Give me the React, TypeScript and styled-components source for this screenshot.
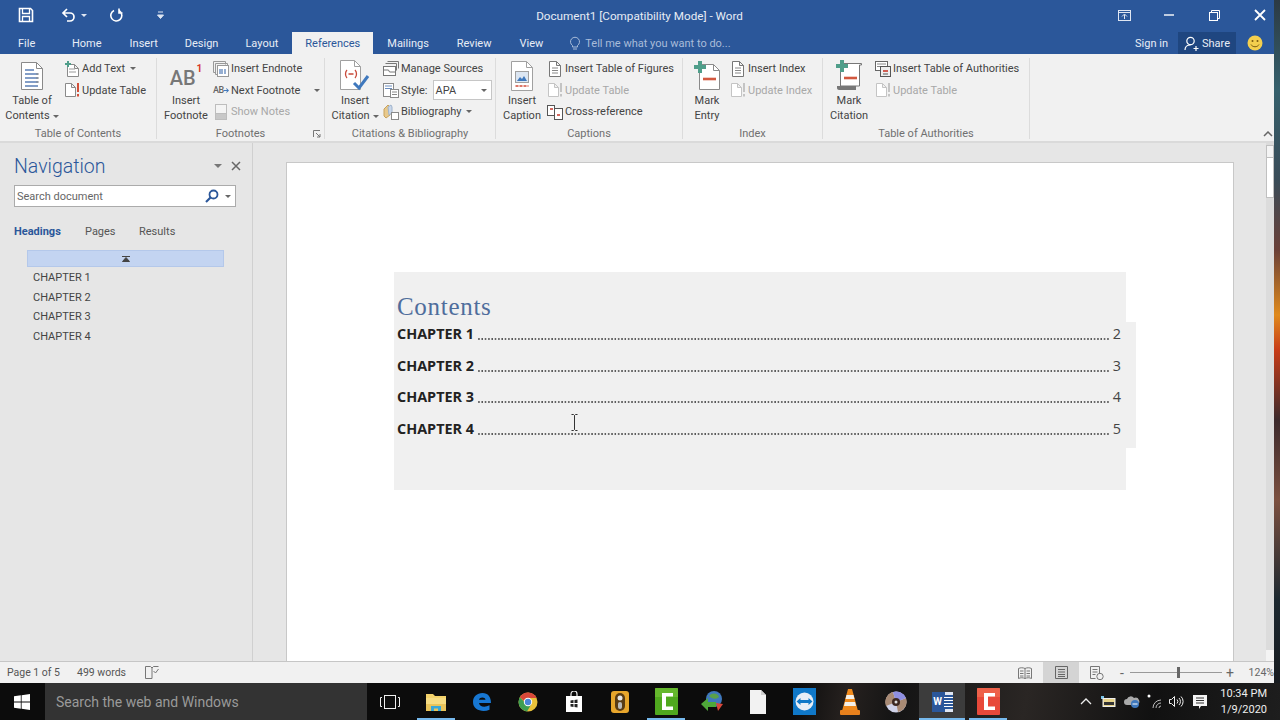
import React from "react";
import styled, { createGlobalStyle } from "styled-components";

const BLUE = "#2b579a";

const GlobalStyle = createGlobalStyle`
  html, body {
    margin: 0;
    padding: 0;
    width: 1280px;
    height: 720px;
    overflow: hidden;
    font-family: "Roboto", "Open Sans", sans-serif;
  }
  * { box-sizing: border-box; }
  svg { display: block; }
`;

const Screen = styled.div`
  width: 1280px;
  height: 720px;
  display: flex;
  flex-direction: column;
  background: #111;
`;
const Desktop = styled.div`
  display: flex;
  height: 683px;
`;
const Wallpaper = styled.div`
  flex: 1;
  background: linear-gradient(
    180deg,
    #2c3a44 0,
    #35606c 90px,
    #3a4c58 180px,
    #6a4038 250px,
    #e08a1c 315px,
    #c83c18 350px,
    #3c2a2c 420px,
    #7c5040 500px,
    #1c2830 600px,
    #181c20 683px
  );
`;
const Window = styled.div`
  width: 1274px;
  display: flex;
  flex-direction: column;
  background: #e6e6e6;
`;

/* title bar */
const TitleBar = styled.div`
  height: 32px;
  background: ${BLUE};
  display: grid;
  grid-template-columns: 1fr auto 1fr;
  align-items: center;
  color: #fff;
`;
const Qat = styled.div`
  display: flex;
  align-items: center;
  padding: 0 0 2px 18px;
`;
const TitleText = styled.div`
  font-size: 11.7px;
  color: #e6ecf5;
  margin-left: 5px;
`;
const WinControls = styled.div`
  display: flex;
  justify-content: flex-end;
  align-items: center;
  margin-right: -8px;
  padding-bottom: 2px;
`;
const WinButton = styled.div<{ $w: number }>`
  width: ${(p) => p.$w}px;
  display: flex;
  justify-content: center;
`;
const Caret = styled.span<{ $c?: string; $ml?: number }>`
  display: inline-block;
  width: 0;
  height: 0;
  flex: none;
  margin-left: ${(p) => p.$ml ?? 3}px;
  vertical-align: middle;
  border-left: 3px solid transparent;
  border-right: 3px solid transparent;
  border-top: 3px solid ${(p) => p.$c ?? "#666"};
`;
const QatItem = styled.div<{ $w: number }>`
  display: flex;
  align-items: center;
  width: ${(p) => p.$w}px;
`;

/* tabs */
const TabRow = styled.div`
  height: 22px;
  background: ${BLUE};
  display: flex;
  align-items: stretch;
  font-size: 11px;
  color: #e8edf6;
`;
const FileTab = styled.div`
  width: 58px;
  padding-left: 18px;
  display: flex;
  align-items: center;
`;
const Tab = styled.div<{ $active?: boolean; $tight?: boolean }>`
  padding: 0 ${(p) => (p.$active ? 13 : p.$tight ? 13 : 14)}px;
  display: flex;
  align-items: center;
  background: ${(p) => (p.$active ? "#f1f1f1" : "transparent")};
  color: ${(p) => (p.$active ? BLUE : "#e8edf6")};
`;
const TellMe = styled.div`
  display: flex;
  align-items: center;
  gap: 5px;
  margin-left: 13px;
  color: #a9bcd9;
`;
const TabRight = styled.div`
  margin-left: auto;
  display: flex;
  align-items: center;
`;
const SignIn = styled.div`
  margin-right: 10px;
`;
const ShareButton = styled.div`
  width: 58px;
  height: 22px;
  background: #1f4680;
  display: flex;
  align-items: center;
  justify-content: center;
  gap: 3px;
`;
const SmileSlot = styled.div`
  width: 38px;
  display: flex;
  justify-content: center;
`;

/* ribbon */
const Ribbon = styled.div`
  height: 89px;
  background: #f1f1f1;
  border-bottom: 2px solid #dadada;
  display: flex;
  font-size: 11px;
  color: #444;
`;
const Group = styled.div<{ $w: number }>`
  width: ${(p) => p.$w}px;
  margin-top: 4px;
  height: 81px;
  display: flex;
  flex-direction: column;
  border-right: 1px solid #dcdcdc;
  flex: none;
`;
const GroupBody = styled.div<{ $pad: number }>`
  height: 69px;
  flex: none;
  display: flex;
  padding-left: ${(p) => p.$pad}px;
`;
const GroupLabel = styled.div`
  position: relative;
  flex: none;
  text-align: center;
  font-size: 11px;
  color: #707070;
  line-height: 14px;
`;
const Launcher = styled.span`
  position: absolute;
  right: 3px;
  top: 3px;
`;
const BigButton = styled.div<{ $w: number }>`
  width: ${(p) => p.$w}px;
  flex: none;
  display: flex;
  flex-direction: column;
  align-items: center;
  text-align: center;
  line-height: 15px;
  color: #444;
`;
const BigIcon = styled.div`
  height: 35px;
  display: flex;
  align-items: center;
  justify-content: center;
`;
const FootnoteGlyph = styled.div`
  font-size: 20px;
  font-weight: 500;
  color: #777;
  display: flex;
  align-items: flex-start;
  line-height: 24px;
  margin-top: 4px;
  sup {
    font-size: 10px;
    font-weight: 700;
    line-height: 12px;
    color: #d8392a;
    margin-top: -3px;
    margin-left: 1px;
  }
`;
const SmallColumn = styled.div<{ $gap: number }>`
  margin-left: ${(p) => p.$gap}px;
  display: flex;
  flex-direction: column;
`;
const SmallButton = styled.div<{ $off?: boolean }>`
  height: 21.5px;
  display: flex;
  align-items: center;
  gap: 2px;
  white-space: nowrap;
  color: ${(p) => (p.$off ? "#a8a8a8" : "#444")};
`;
const SmallIcon = styled.span`
  width: 16px;
  height: 16px;
  flex: none;
  display: flex;
  align-items: center;
  justify-content: center;
`;
const TinyAB = styled.span`
  font-size: 9px;
  font-weight: 500;
  color: #666;
  letter-spacing: -0.5px;
`;
const StyleBox = styled.div`
  width: 59px;
  height: 20px;
  margin-left: 3px;
  background: #fff;
  border: 1px solid #c6c6c6;
  display: flex;
  align-items: center;
  justify-content: space-between;
  padding: 0 4px 0 2px;
`;
const Collapse = styled.div`
  margin-left: auto;
  align-self: flex-end;
  padding: 0 1px 4px 0;
`;

/* main area */
const Main = styled.div`
  flex: 1;
  min-height: 0;
  display: flex;
`;
const NavPane = styled.div`
  width: 253px;
  flex: none;
  border-right: 1px solid #d0d0d0;
  padding: 11px 6px 0 14px;
  color: #444;
`;
const NavHeader = styled.div`
  display: flex;
  align-items: center;
  height: 24px;
`;
const NavTitle = styled.div`
  font-size: 19.5px;
  font-weight: 300;
  color: ${BLUE};
  flex: 1;
`;
const NavCaret = styled(Caret)`
  margin-right: 4px;
  border-left-width: 4px;
  border-right-width: 4px;
  border-top-width: 4px;
`;
const NavSearch = styled.div`
  margin-top: 7px;
  width: 222px;
  height: 22px;
  background: #fff;
  border: 1px solid #ababab;
  display: flex;
  align-items: center;
  padding: 0 4px 0 2px;
  font-size: 11px;
  color: #666;
`;
const NavSearchText = styled.span`
  flex: 1;
`;
const NavTabs = styled.div`
  display: flex;
  margin-top: 17px;
  font-size: 11px;
  height: 14px;
  align-items: center;
`;
const NavTab = styled.div<{ $active?: boolean; $w: number }>`
  width: ${(p) => p.$w}px;
  font-weight: ${(p) => (p.$active ? 700 : 400)};
  color: ${(p) => (p.$active ? BLUE : "#555")};
`;
const NavList = styled.div`
  margin: 12px 0 0 13px;
`;
const NavSelected = styled.div`
  width: 197px;
  height: 17px;
  margin-bottom: 1px;
  background: #c3d4f1;
  border: 1px solid #b4c8ea;
  display: flex;
  align-items: center;
  justify-content: center;
`;
const NavItem = styled.div`
  height: 19.7px;
  padding-left: 6px;
  font-size: 11px;
  line-height: 19.7px;
  color: #444;
`;
const DocArea = styled.div`
  flex: 1;
  min-width: 0;
  overflow: hidden;
  padding: 19px 0 0 33px;
  background: #e6e6e6;
`;
const Page = styled.div`
  position: relative;
  width: 948px;
  height: 600px;
  background: #fff;
  border: 1px solid #c8c8c8;
  padding: 109px 0 0 107px;
`;
const TocField = styled.div`
  width: 732px;
  height: 218px;
  background: #f0f0f0;
  padding: 20px 0 0 3px;
`;
const TocTitle = styled.div`
  font-family: "Liberation Serif", serif;
  font-size: 25px;
  letter-spacing: 0.7px;
  line-height: 30px;
  color: #4f6d9c;
`;
const TocRow = styled.div`
  display: flex;
  align-items: flex-start;
  height: 31.5px;
  width: 739px;
  margin-right: -10px;
  padding-right: 15px;
  background: #f0f0f0;
  font-family: "Open Sans", sans-serif;
  line-height: 24px;
  color: #222;
  font-size: 14.4px;
`;
const TocName = styled.span`
  font-weight: 700;
`;
const Leader = styled.span`
  flex: 1;
  height: 2px;
  margin: 16px 3px 0 4px;
  background: radial-gradient(circle at 1px 1px, #555 0.7px, transparent 1px) 0 0 / 3.33px 2px repeat-x;
`;
const PageNum = styled.span`
  color: #444;
`;
const TextCursor = styled.div`
  position: absolute;
  left: 284px;
  top: 251px;
`;
const ScrollBar = styled.div`
  width: 8px;
  flex: none;
  background: #dcdcdc;
  display: flex;
  flex-direction: column;
`;
const ScrollUp = styled.div`
  height: 13px;
  background: #f4f4f4;
  border: 1px solid #c0c0c0;
  margin-top: 2px;
`;
const ScrollThumb = styled.div`
  height: 40px;
  background: #fff;
  border: 1px solid #c0c0c0;
  border-top: 0;
`;
const ScrollDown = styled.div`
  height: 11px;
  margin-top: auto;
  background: #f4f4f4;
`;

/* status bar */
const StatusBar = styled.div`
  height: 22px;
  background: #f1f1f1;
  border-top: 1px solid #c6c6c6;
  display: flex;
  align-items: center;
  font-size: 10.5px;
  color: #555;
  padding-left: 7px;
`;
const StatusWords = styled.span`
  margin-left: 17px;
`;
const StatusProof = styled.span`
  margin-left: 19px;
`;
const StatusRight = styled.div`
  margin-left: auto;
  display: flex;
  align-items: center;
  height: 100%;
`;
const ViewButton = styled.div<{ $active?: boolean }>`
  width: 36px;
  height: 100%;
  display: flex;
  align-items: center;
  justify-content: center;
  background: ${(p) => (p.$active ? "#d4d4d4" : "transparent")};
`;
const ZoomSign = styled.span`
  width: 14px;
  text-align: center;
  font-size: 14px;
  color: #666;
`;
const ZoomTrack = styled.div`
  position: relative;
  width: 92px;
  height: 1px;
  background: #999;
  margin: 0 1px;
`;
const ZoomThumb = styled.div`
  position: absolute;
  left: 47px;
  top: -5px;
  width: 3px;
  height: 11px;
  background: #666;
`;
const ZoomValue = styled.span`
  width: 37px;
  text-align: right;
  color: #666;
`;

/* taskbar */
const Taskbar = styled.div`
  height: 37px;
  display: flex;
  background: linear-gradient(100deg, #0c0c0c 0, #0c0c0c 62%, #26211f 66%, #141414 70%, #2a2624 80%, #111 90%, #1e1e1e 100%);
  color: #fff;
`;
const StartButton = styled.div`
  width: 45px;
  display: flex;
  align-items: center;
  justify-content: center;
  padding-right: 1px;
`;
const TaskSearch = styled.div`
  width: 322px;
  background: #333;
  display: flex;
  align-items: center;
  padding-left: 11px;
  font-size: 14px;
  color: #9a9a9a;
`;
const TaskButton = styled.div<{ $running?: boolean; $active?: boolean }>`
  position: relative;
  width: 46px;
  display: flex;
  align-items: center;
  justify-content: center;
  background: ${(p) => (p.$active ? "#3c3c3c" : "transparent")};
  &::after {
    content: "";
    display: ${(p) => (p.$running ? "block" : "none")};
    position: absolute;
    bottom: 0;
    left: ${(p) => (p.$active ? 0 : 4)}px;
    right: ${(p) => (p.$active ? 0 : 4)}px;
    height: 2px;
    background: #76b9ed;
  }
`;
const Tray = styled.div`
  margin-left: auto;
  display: flex;
  align-items: center;
  padding-right: 13px;
`;
const TraySlot = styled.div`
  width: 22.7px;
  display: flex;
  justify-content: center;
`;
const Clock = styled.div`
  width: 56px;
  text-align: right;
  font-size: 11px;
  line-height: 16px;
  color: #eee;
`;

/* icons */
const Svg = ({ w, h, children }: { w: number; h: number; children: React.ReactNode }) => (
  <svg width={w} height={h} viewBox={`0 0 ${w} ${h}`} fill="none">
    {children}
  </svg>
);

const PageShape = ({ x = 0.5, y = 0.5, w = 11, h = 14, c = "#8a8a8a", fill = "#fff" }) => (
  <path
    d={`M${x} ${y}h${w - 4}l4 4v${h - 4}h-${w}z M${x + w - 4} ${y}v4h4`}
    stroke={c}
    fill={fill}
  />
);

const TocBig = () => (
  <Svg w={24} h={30}>
    <path d="M1.500 1.500h15l6 6v21h-21z" fill="#fff" stroke="#8a8a8a" />
    <path d="M16.500 1.500v6h6" stroke="#8a8a8a" />
    <path d="M5 9h9M5 13h13M5 17h13M5 21h13M5 25h13" stroke="#5b7fb5" strokeWidth="1.600" />
    <path d="M16 13h3M16 17h3M16 21h3" stroke="#888" />
  </Svg>
);
const CitationBig = () => (
  <Svg w={36} h={34}>
    <path d="M3.500 1.500h14l6 6v23h-20z" fill="#fff" stroke="#a0a0a0" />
    <path d="M17.500 1.500v6h6" stroke="#a0a0a0" />
    <path d="M10 11c-2 2-2 6 0 8M18 11c2 2 2 6 0 8M11.500 15h5" stroke="#c8493a" strokeWidth="1.300" />
    <path d="M17 24l5 5 9-12" stroke="#3f78bd" strokeWidth="3" />
  </Svg>
);
const CaptionBig = () => (
  <Svg w={24} h={32}>
    <path d="M1.500 1.500h15l6 6v23h-21z" fill="#fff" stroke="#a0a0a0" />
    <path d="M16.500 1.500v6h6" stroke="#a0a0a0" />
    <rect x="5.500" y="11.500" width="13" height="11" fill="#dce6f2" stroke="#a0a0a0" />
    <path d="M7 21l3-4 2 2 2-3 3 5z" fill="#3f78bd" />
    <path d="M5.500 26h13" stroke="#d24b3a" strokeWidth="1.600" strokeDasharray="3 1" />
  </Svg>
);
const MarkEntryBig = () => (
  <Svg w={28} h={30}>
    <path d="M6.500 3.500h14l6 6v19h-20z" fill="#fff" stroke="#8a8a8a" />
    <path d="M20.500 3.500v6h6" stroke="#8a8a8a" />
    <path d="M5 0h4v4h4v4H9v4H5V8H1V4h4z" fill="#4f9e8a" />
    <path d="M10 18h13" stroke="#d2583f" strokeWidth="2.600" />
  </Svg>
);
const MarkCitationBig = () => (
  <Svg w={30} h={31}>
    <path d="M8.500 3.500h19v1.500h-2V26h-19V6z" fill="#fff" stroke="#777" />
    <path d="M3 26h19v4H5c-1 0-2-1-2-2z" fill="#777" />
    <path d="M6 0h4v4h4v4h-4v4H6V8H2V4h4z" fill="#4f9e8a" />
    <path d="M10 18h13" stroke="#d2583f" strokeWidth="2.600" />
  </Svg>
);

const AddTextIcon = () => (
  <Svg w={16} h={16}>
    <PageShape x={3.5} y={3.5} w={11} h={12} />
    <path d="M5 8h6M5 11h7" stroke="#999" />
    <path d="M3 0h2v2h2v2H5v2H3V4H1V2h2z" fill="#4f9e8a" />
  </Svg>
);
const UpdateIcon = ({ off }: { off?: boolean }) => (
  <Svg w={16} h={16}>
    <PageShape x={1.5} y={1.5} w={10} h={13} c={off ? "#c4c4c4" : "#8a8a8a"} />
    <path d="M14 1v9M14 12v2.500" stroke={off ? "#c4c4c4" : "#d2503a"} strokeWidth="2" />
  </Svg>
);
const EndnoteIcon = () => (
  <Svg w={16} h={16}>
    <path d="M0.500 0.500h12v3M0.500 0.500v11h2" stroke="#999" />
    <path d="M2.500 2.500h12v3M2.500 2.500v11h2" stroke="#999" />
    <rect x="4.500" y="4.500" width="11" height="11" fill="#fff" stroke="#999" />
    <path d="M7 8v5M9 8v5M12 8v5" stroke="#6a8dbf" strokeWidth="1.400" />
  </Svg>
);
const NextNoteIcon = () => (
  <Svg w={8} h={9}>
    <path d="M0 4.500h6M3.500 1.500l3 3-3 3" stroke="#3f78bd" strokeWidth="1.500" />
  </Svg>
);
const NotesIcon = () => (
  <Svg w={16} h={16}>
    <rect x="2.500" y="0.500" width="11" height="15" fill="#f4f4f4" stroke="#bdbdbd" />
    <rect x="2.500" y="9.500" width="11" height="6" fill="#c8c8c8" stroke="#bdbdbd" />
  </Svg>
);
const SourcesIcon = () => (
  <Svg w={16} h={16}>
    <path d="M4.500 0.500h11v7M2.500 2.500h11v7" stroke="#777" />
    <rect x="0.500" y="5.500" width="12" height="9" fill="#fff" stroke="#777" />
    <path d="M0.500 9h5l1 2h6" stroke="#777" />
  </Svg>
);
const StyleIcon = () => (
  <Svg w={16} h={16}>
    <rect x="0.500" y="1.500" width="10" height="13" fill="#fff" stroke="#8a8a8a" />
    <path d="M2 4h7M2 6.500h7" stroke="#6a8dbf" />
    <rect x="7.500" y="7.500" width="8" height="8" fill="#fff" stroke="#8a8a8a" />
    <path d="M9 10h5M9 12.500h5" stroke="#888" />
  </Svg>
);
const BibIcon = () => (
  <Svg w={16} h={16}>
    <path d="M1 5l4-4 2 2v8l-4 3-2-2z" fill="#e8c98c" stroke="#c8a25c" />
    <path d="M5 3l3-2 1 2v6l-3 2z" fill="#c9d7ea" stroke="#9fb3cc" />
    <rect x="8.500" y="8.500" width="7" height="7" fill="#fff" stroke="#8a8a8a" />
  </Svg>
);
const TofIcon = () => (
  <Svg w={16} h={16}>
    <PageShape x={2.5} y={0.5} w={11} h={15} c="#777" />
    <path d="M5 7h6M5 9.500h6M5 12h6" stroke="#888" />
  </Svg>
);
const CrossRefIcon = () => (
  <Svg w={16} h={16}>
    <rect x="0.500" y="1.500" width="7" height="10" fill="#fff" stroke="#555" />
    <rect x="7.500" y="4.500" width="8" height="11" fill="#fff" stroke="#555" />
    <path d="M3 5h3M10 11h3" stroke="#c8392b" strokeWidth="1.600" />
  </Svg>
);
const ToaIcon = () => (
  <Svg w={16} h={16}>
    <rect x="0.500" y="0.500" width="12" height="9" fill="#fff" stroke="#666" />
    <path d="M2 3h9M2 5.500h9" stroke="#888" />
    <rect x="5.500" y="5.500" width="10" height="10" fill="#eee" stroke="#555" />
    <path d="M8 10h5" stroke="#c8392b" strokeWidth="1.600" />
    <path d="M8 13h5" stroke="#555" />
  </Svg>
);

const AppFolder = () => (
  <Svg w={20} h={18}>
    <path d="M0 1h7l2 2h11v3H0z" fill="#f3d26a" />
    <rect y="5" width="20" height="13" fill="#f6dc82" />
    <rect x="0" y="11" width="20" height="7" fill="#e9c45a" />
    <path d="M5 18v-5h10v5h-3v-2.500H8V18z" fill="#38a7d8" />
  </Svg>
);
const AppEdge = () => (
  <Svg w={20} h={20}>
    <path
      d="M1 10C1 4.500 5 1 10.500 1 16 1 19 5 19 11H7c.3 3.500 5.500 5 10.500 2.300v4.400C11 20.500 1 18.500 1 10zm6-2.200h6.500C13.300 4.800 7.600 4.600 7 7.800z"
      fill="#1777d2"
    />
  </Svg>
);
const AppChrome = () => (
  <Svg w={20} h={20}>
    <circle cx="10" cy="10" r="9.500" fill="#e8c13a" />
    <path d="M1.800 5.200A9.500 9.500 0 0 1 18.600 6H10a4 4 0 0 0-3.900 3z" fill="#d8473a" />
    <path d="M1.800 5.200A9.500 9.500 0 0 0 9 19.400L13 12.800a4.300 4.300 0 0 1-6.800-3z" fill="#3f9e52" />
    <circle cx="10" cy="10" r="4.200" fill="#fff" />
    <circle cx="10" cy="10" r="3.200" fill="#4a86d8" />
  </Svg>
);
const AppStore = () => (
  <Svg w={18} h={22}>
    <path d="M6 5V3a3 3 0 0 1 6 0v2" stroke="#eee" strokeWidth="1.200" />
    <rect x="1" y="5" width="16" height="16" fill="#fff" />
    <path d="M5.500 9.500l3-.5v3H5.500zM9.500 8.900l3-.5V12h-3zM5.500 13h3v3l-3-.5zM9.500 13h3v3.600l-3-.5z" fill="#222" />
  </Svg>
);
const AppBulb = () => (
  <Svg w={18} h={22}>
    <rect x="0" y="0" width="18" height="22" rx="3" fill="#e8a62c" />
    <rect x="4" y="2" width="10" height="18" rx="5" fill="#5a3c14" />
    <circle cx="9" cy="7" r="2.500" fill="#e8e8e8" />
    <rect x="7" y="11" width="4" height="7" rx="2" fill="#bbb" />
  </Svg>
);
const AppCamtasia = ({ bg, top }: { bg: string; top: string }) => (
  <Svg w={23} h={27}>
    <rect width="23" height="27" rx="1" fill={bg} />
    <path d="M0 0h23v9H0z" fill={top} opacity="0.5" />
    <path d="M7 5h11v3.500h-7v10h7V22H7z" fill="#fff" />
  </Svg>
);
const AppIdm = () => (
  <Svg w={24} h={24}>
    <circle cx="14" cy="9" r="8" fill="#3f78bd" />
    <path d="M9 6c3-4 9-3 10 1-3 3-7 2-10-1z" fill="#5aa04a" />
    <path d="M1 14l7-6v4h8v5H8v4z" fill="#4fa83a" />
    <path d="M16 13l7 1-5 7z" fill="#d8473a" />
  </Svg>
);
const AppFile = () => (
  <Svg w={16} h={24}>
    <path d="M0 0h11l5 5v19H0z" fill="#f2f2f2" />
    <path d="M11 0v5h5z" fill="#cfcfcf" />
  </Svg>
);
const AppTeamViewer = () => (
  <Svg w={23} h={27}>
    <rect width="23" height="27" fill="#1078c8" />
    <circle cx="11.500" cy="13.500" r="9" fill="#e8eef6" />
    <path d="M3.500 13.500l4-3.500v2h8v-2l4 3.500-4 3.500v-2h-8v2z" fill="#1078c8" />
  </Svg>
);
const AppVlc = () => (
  <Svg w={20} h={26}>
    <path d="M8 0h4l6 22H2z" fill="#f08a1c" />
    <path d="M6.500 6h7l1 4h-9zM5 13h10l1 4H4z" fill="#f4f0e8" />
    <rect y="21" width="20" height="5" rx="1" fill="#e8801c" />
  </Svg>
);
const AppDisc = () => (
  <Svg w={22} h={22}>
    <circle cx="11" cy="11" r="10.500" fill="#cfd2e8" />
    <path d="M11 11L21 7a10.500 10.500 0 0 1-8 14zM11 11L1 15A10.500 10.500 0 0 1 8 1z" fill="#a88a74" />
    <path d="M11 11L8 1a10.500 10.500 0 0 1 13 6z" fill="#8f8fe0" />
    <circle cx="11" cy="11" r="4" fill="#3c2820" />
    <circle cx="11" cy="11" r="1.500" fill="#ddd" />
  </Svg>
);
const WordLetter = styled.span`
  font-size: 10px;
  font-weight: 700;
  color: #fff;
  width: 12px;
  text-align: center;
`;
const WordTile = styled.div`
  width: 21px;
  height: 20px;
  display: flex;
  align-items: center;
  background: linear-gradient(90deg, ${BLUE} 60%, #dfe6f2 60%);
`;
const WordLines = styled.span`
  width: 9px;
  height: 14px;
  background: repeating-linear-gradient(180deg, #2b579a 0 1.5px, #fff 1.5px 3px);
`;

const chapters = ["CHAPTER 1", "CHAPTER 2", "CHAPTER 3", "CHAPTER 4"];

export default function App() {
  return (
    <Screen>
      <GlobalStyle />
      <Desktop>
        <Window>
          <TitleBar>
            <Qat>
              <QatItem $w={43}>
                <Svg w={16} h={16}>
                  <path d="M1.500 1.500h11l2 2v11h-13z" stroke="#fff" strokeWidth="1.600" />
                  <path d="M4.500 2v4.500h7V2M4.500 14v-4.500h7V14" stroke="#fff" strokeWidth="1.300" />
                </Svg>
              </QatItem>
              <QatItem $w={48}>
                <Svg w={15} h={14}>
                  <path d="M6 1L2 5l4 4M2 5h7a4 4 0 0 1 0 8H6" stroke="#fff" strokeWidth="1.700" />
                </Svg>
                <Caret $c="#dfe6f2" $ml={5} />
              </QatItem>
              <QatItem $w={48}>
                <Svg w={14} h={14}>
                  <path d="M5 2.500A5.500 5.500 0 1 0 10.500 3M10 .5v4.500h3.500" stroke="#fff" strokeWidth="1.600" />
                </Svg>
              </QatItem>
              <QatItem $w={10}>
                <Svg w={7} h={8}>
                  <path d="M1 1h5M0.500 4h6l-3 3.500z" stroke="#dfe6f2" fill="#dfe6f2" strokeWidth="1" />
                </Svg>
              </QatItem>
            </Qat>
            <TitleText>Document1 [Compatibility Mode] - Word</TitleText>
            <WinControls>
              <WinButton $w={44}>
                <Svg w={13} h={11}>
                  <rect x="0.500" y="0.500" width="12" height="10" stroke="#dfe6f2" />
                  <path d="M0.500 2.500h12M6.500 9V4.500M4 6.500l2.500-2.500L9 6.500" stroke="#dfe6f2" />
                </Svg>
              </WinButton>
              <WinButton $w={46}>
                <Svg w={10} h={2}>
                  <path d="M0 1h10" stroke="#fff" strokeWidth="1.400" />
                </Svg>
              </WinButton>
              <WinButton $w={45}>
                <Svg w={11} h={11}>
                  <rect x="0.500" y="2.500" width="8" height="8" stroke="#fff" />
                  <path d="M2.500 2.500v-2h8v8h-2" stroke="#fff" />
                </Svg>
              </WinButton>
              <WinButton $w={45}>
                <Svg w={12} h={12}>
                  <path d="M1 1l10 10M11 1L1 11" stroke="#fff" strokeWidth="1.800" />
                </Svg>
              </WinButton>
            </WinControls>
          </TitleBar>

          <TabRow>
            <FileTab>File</FileTab>
            <Tab>Home</Tab>
            <Tab>Insert</Tab>
            <Tab $tight>Design</Tab>
            <Tab>Layout</Tab>
            <Tab $active>References</Tab>
            <Tab>Mailings</Tab>
            <Tab>Review</Tab>
            <Tab>View</Tab>
            <TellMe>
              <Svg w={10} h={14}>
                <path d="M2.500 9.500a4.500 4.500 0 1 1 5 0V11h-5zM3 13h4" stroke="#a9bcd9" />
              </Svg>
              Tell me what you want to do...
            </TellMe>
            <TabRight>
              <SignIn>Sign in</SignIn>
              <ShareButton>
                <Svg w={15} h={15}>
                  <circle cx="6.500" cy="5" r="3.700" stroke="#fff" strokeWidth="1.200" />
                  <path d="M1 14c0-3 2-5 5.500-5M9.500 12.500h5M12 10v5" stroke="#fff" strokeWidth="1.200" />
                </Svg>
                Share
              </ShareButton>
              <SmileSlot>
                <Svg w={16} h={16}>
                  <circle cx="8" cy="8" r="7.500" fill="#f4cf4e" />
                  <circle cx="5.500" cy="6" r="1" fill="#7a5c10" />
                  <circle cx="10.500" cy="6" r="1" fill="#7a5c10" />
                  <path d="M4 9.500c1.500 3 6.500 3 8 0" stroke="#7a5c10" />
                </Svg>
              </SmileSlot>
            </TabRight>
          </TabRow>

          <Ribbon>
            <Group $w={157}>
              <GroupBody $pad={5}>
                <BigButton $w={54}>
                  <BigIcon><TocBig /></BigIcon>
                  Table of
                  <span>Contents<Caret /></span>
                </BigButton>
                <SmallColumn $gap={5}>
                  <SmallButton><SmallIcon><AddTextIcon /></SmallIcon>Add Text<Caret /></SmallButton>
                  <SmallButton><SmallIcon><UpdateIcon /></SmallIcon>Update Table</SmallButton>
                </SmallColumn>
              </GroupBody>
              <GroupLabel>Table of Contents</GroupLabel>
            </Group>

            <Group $w={168}>
              <GroupBody $pad={1}>
                <BigButton $w={56}>
                  <BigIcon>
                    <FootnoteGlyph>AB<sup>1</sup></FootnoteGlyph>
                  </BigIcon>
                  Insert
                  <span>Footnote</span>
                </BigButton>
                <SmallColumn $gap={-1}>
                  <SmallButton><SmallIcon><EndnoteIcon /></SmallIcon>Insert Endnote</SmallButton>
                  <SmallButton>
                    <SmallIcon><TinyAB>AB</TinyAB><NextNoteIcon /></SmallIcon>
                    Next Footnote<Caret $ml={12} />
                  </SmallButton>
                  <SmallButton $off><SmallIcon><NotesIcon /></SmallIcon>Show Notes</SmallButton>
                </SmallColumn>
              </GroupBody>
              <GroupLabel>
                Footnotes
                <Launcher>
                  <Svg w={8} h={8}>
                    <path d="M0.500 7V0.500H7M3 3l4 4M7 4v3H4" stroke="#777" />
                  </Svg>
                </Launcher>
              </GroupLabel>
            </Group>

            <Group $w={171}>
              <GroupBody $pad={2}>
                <BigButton $w={56}>
                  <BigIcon><CitationBig /></BigIcon>
                  Insert
                  <span>Citation<Caret /></span>
                </BigButton>
                <SmallColumn $gap={0}>
                  <SmallButton><SmallIcon><SourcesIcon /></SmallIcon>Manage Sources</SmallButton>
                  <SmallButton>
                    <SmallIcon><StyleIcon /></SmallIcon>Style:
                    <StyleBox>APA<Caret /></StyleBox>
                  </SmallButton>
                  <SmallButton><SmallIcon><BibIcon /></SmallIcon>Bibliography<Caret /></SmallButton>
                </SmallColumn>
              </GroupBody>
              <GroupLabel>Citations &amp; Bibliography</GroupLabel>
            </Group>

            <Group $w={187}>
              <GroupBody $pad={2}>
                <BigButton $w={48}>
                  <BigIcon><CaptionBig /></BigIcon>
                  Insert
                  <span>Caption</span>
                </BigButton>
                <SmallColumn $gap={1}>
                  <SmallButton><SmallIcon><TofIcon /></SmallIcon>Insert Table of Figures</SmallButton>
                  <SmallButton $off><SmallIcon><UpdateIcon off /></SmallIcon>Update Table</SmallButton>
                  <SmallButton><SmallIcon><CrossRefIcon /></SmallIcon>Cross-reference</SmallButton>
                </SmallColumn>
              </GroupBody>
              <GroupLabel>Captions</GroupLabel>
            </Group>

            <Group $w={140}>
              <GroupBody $pad={4}>
                <BigButton $w={40}>
                  <BigIcon><MarkEntryBig /></BigIcon>
                  Mark
                  <span>Entry</span>
                </BigButton>
                <SmallColumn $gap={3}>
                  <SmallButton><SmallIcon><TofIcon /></SmallIcon>Insert Index</SmallButton>
                  <SmallButton $off><SmallIcon><UpdateIcon off /></SmallIcon>Update Index</SmallButton>
                </SmallColumn>
              </GroupBody>
              <GroupLabel>Index</GroupLabel>
            </Group>

            <Group $w={207}>
              <GroupBody $pad={2}>
                <BigButton $w={48}>
                  <BigIcon><MarkCitationBig /></BigIcon>
                  Mark
                  <span>Citation</span>
                </BigButton>
                <SmallColumn $gap={2}>
                  <SmallButton><SmallIcon><ToaIcon /></SmallIcon>Insert Table of Authorities</SmallButton>
                  <SmallButton $off><SmallIcon><UpdateIcon off /></SmallIcon>Update Table</SmallButton>
                </SmallColumn>
              </GroupBody>
              <GroupLabel>Table of Authorities</GroupLabel>
            </Group>

            <Collapse>
              <Svg w={10} h={6}>
                <path d="M1 5l4-4 4 4" stroke="#666" strokeWidth="1.500" />
              </Svg>
            </Collapse>
          </Ribbon>

          <Main>
            <NavPane>
              <NavHeader>
                <NavTitle>Navigation</NavTitle>
                <NavCaret $c="#777" />
                <WinButton $w={20}>
                  <Svg w={10} h={10}>
                    <path d="M1 1l8 8M9 1L1 9" stroke="#666" strokeWidth="1.500" />
                  </Svg>
                </WinButton>
              </NavHeader>
              <NavSearch>
                <NavSearchText>Search document</NavSearchText>
                <Svg w={14} h={14}>
                  <circle cx="8.500" cy="5.500" r="4" stroke={BLUE} strokeWidth="1.800" />
                  <path d="M5.500 8.500L1 13" stroke={BLUE} strokeWidth="2.200" />
                </Svg>
                <Caret $ml={6} />
              </NavSearch>
              <NavTabs>
                <NavTab $active $w={71}>Headings</NavTab>
                <NavTab $w={54}>Pages</NavTab>
                <NavTab $w={40}>Results</NavTab>
              </NavTabs>
              <NavList>
                <NavSelected>
                  <Svg w={8} h={6}>
                    <path d="M0 0.500h8M4 1.500L0.500 5.500h7z" stroke="#444" fill="#444" strokeWidth="1" />
                  </Svg>
                </NavSelected>
                {chapters.map((c) => (
                  <NavItem key={c}>{c}</NavItem>
                ))}
              </NavList>
            </NavPane>

            <DocArea>
              <Page>
                <TocField>
                  <TocTitle>Contents</TocTitle>
                  {chapters.map((c, i) => (
                    <TocRow key={c}>
                      <TocName>{c}</TocName>
                      <Leader />
                      <PageNum>{i + 2}</PageNum>
                    </TocRow>
                  ))}
                </TocField>
                <TextCursor>
                  <Svg w={7} h={17}>
                    <path d="M0.500 0.500h2l1 1 1-1h2M3.500 1.500v14M0.500 16.500h2l1-1 1 1h2" stroke="#333" />
                  </Svg>
                </TextCursor>
              </Page>
            </DocArea>
            <ScrollBar>
              <ScrollUp />
              <ScrollThumb />
              <ScrollDown />
            </ScrollBar>
          </Main>

          <StatusBar>
            Page 1 of 5
            <StatusWords>499 words</StatusWords>
            <StatusProof>
              <Svg w={14} h={13}>
                <path d="M0.500 0.500h5l1.500 1.500v10.500h-6.500zM7 2l1.500-1.500h5" stroke="#777" />
                <path d="M8.500 5l2 2 3-4" stroke="#777" />
              </Svg>
            </StatusProof>
            <StatusRight>
              <ViewButton>
                <Svg w={14} h={12}>
                  <path d="M0.500 1.500c2-1 4.500-1 6.500 0 2-1 4.500-1 6.500 0v10c-2-1-4.500-1-6.500 0-2-1-4.500-1-6.500 0zM7 1.500v10M2 4h3.500M2 6.500h3.500M2 9h3.500M8.500 4H12M8.500 6.500H12M8.500 9H12" stroke="#777" />
                </Svg>
              </ViewButton>
              <ViewButton $active>
                <Svg w={13} h={13}>
                  <path d="M0.500 0.500h12v12h-12zM3 3.500h7M3 6h7M3 8.500h7M3 10.500h7" stroke="#666" />
                </Svg>
              </ViewButton>
              <ViewButton>
                <Svg w={14} h={14}>
                  <path d="M0.500 0.500h9v7M0.500 0.500v12h5M2.500 3.500h5M2.500 6h5M2.500 8.500h3" stroke="#777" />
                  <circle cx="10" cy="10.500" r="3.200" stroke="#777" />
                </Svg>
              </ViewButton>
              <ZoomSign>-</ZoomSign>
              <ZoomTrack><ZoomThumb /></ZoomTrack>
              <ZoomSign>+</ZoomSign>
              <ZoomValue>124%</ZoomValue>
            </StatusRight>
          </StatusBar>
        </Window>
        <Wallpaper />
      </Desktop>

      <Taskbar>
        <StartButton>
          <Svg w={16} h={16}>
            <path d="M0 2.300l6.800-1v6.200H0zM7.600 1.200L16 0v7.500H7.600zM0 8.400h6.800v6.300l-6.800-1zM7.600 8.400H16V16l-8.400-1.200z" fill="#fff" />
          </Svg>
        </StartButton>
        <TaskSearch>Search the web and Windows</TaskSearch>
        <TaskButton>
          <Svg w={20} h={14}>
            <rect x="4.500" y="0.500" width="11" height="13" stroke="#eee" />
            <path d="M2 2.500H0.500v9H2M18 2.500h1.500v9H18" stroke="#eee" />
          </Svg>
        </TaskButton>
        <TaskButton $running><AppFolder /></TaskButton>
        <TaskButton><AppEdge /></TaskButton>
        <TaskButton><AppChrome /></TaskButton>
        <TaskButton><AppStore /></TaskButton>
        <TaskButton><AppBulb /></TaskButton>
        <TaskButton $running><AppCamtasia bg="#4fa81e" top="#7cc83c" /></TaskButton>
        <TaskButton><AppIdm /></TaskButton>
        <TaskButton><AppFile /></TaskButton>
        <TaskButton><AppTeamViewer /></TaskButton>
        <TaskButton><AppVlc /></TaskButton>
        <TaskButton><AppDisc /></TaskButton>
        <TaskButton $running $active>
          <WordTile>
            <WordLetter>W</WordLetter>
            <WordLines />
          </WordTile>
        </TaskButton>
        <TaskButton $running><AppCamtasia bg="#e8493a" top="#f47a5a" /></TaskButton>
        <Tray>
          <TraySlot>
            <Svg w={12} h={7}>
              <path d="M1 6l5-5 5 5" stroke="#eee" strokeWidth="1.300" />
            </Svg>
          </TraySlot>
          <TraySlot>
            <Svg w={15} h={13}>
              <path d="M0 1h3v3H0z" fill="#7ac4e8" />
              <rect x="2" y="3.500" width="12" height="8" fill="#e8d48a" stroke="#eee" />
              <rect x="3" y="7" width="10" height="3" fill="#333" />
            </Svg>
          </TraySlot>
          <TraySlot>
            <Svg w={16} h={13}>
              <path d="M3 10a3 3 0 0 1 0-6 4 4 0 0 1 7-1 3.500 3.500 0 0 1 3 7z" fill="#aaa" />
              <circle cx="11" cy="9" r="4" fill="#3f78bd" />
              <path d="M8.500 9h5" stroke="#fff" />
            </Svg>
          </TraySlot>
          <TraySlot>
            <Svg w={15} h={15}>
              <path d="M6 14a8 8 0 0 1 8-8M9 14a5 5 0 0 1 5-5M12 14a2 2 0 0 1 2-2" stroke="#bbb" />
              <circle cx="2" cy="2" r="1.500" fill="#fff" />
            </Svg>
          </TraySlot>
          <TraySlot>
            <Svg w={15} h={13}>
              <path d="M0.500 4.500h2l3-3v10l-3-3h-2z" stroke="#eee" />
              <path d="M8 4.500a3 3 0 0 1 0 4M10 3a5 5 0 0 1 0 7M12 1.500a7 7 0 0 1 0 10" stroke="#eee" />
            </Svg>
          </TraySlot>
          <TraySlot>
            <Svg w={14} h={16}>
              <path d="M0 1h14v11H8l-2 3v-3H0z" fill="#f4f4f4" />
              <path d="M3 4h8M3 6.500h8M3 9h8" stroke="#333" />
            </Svg>
          </TraySlot>
          <Clock>
            10:34 PM
            <br />
            1/9/2020
          </Clock>
        </Tray>
      </Taskbar>
    </Screen>
  );
}
